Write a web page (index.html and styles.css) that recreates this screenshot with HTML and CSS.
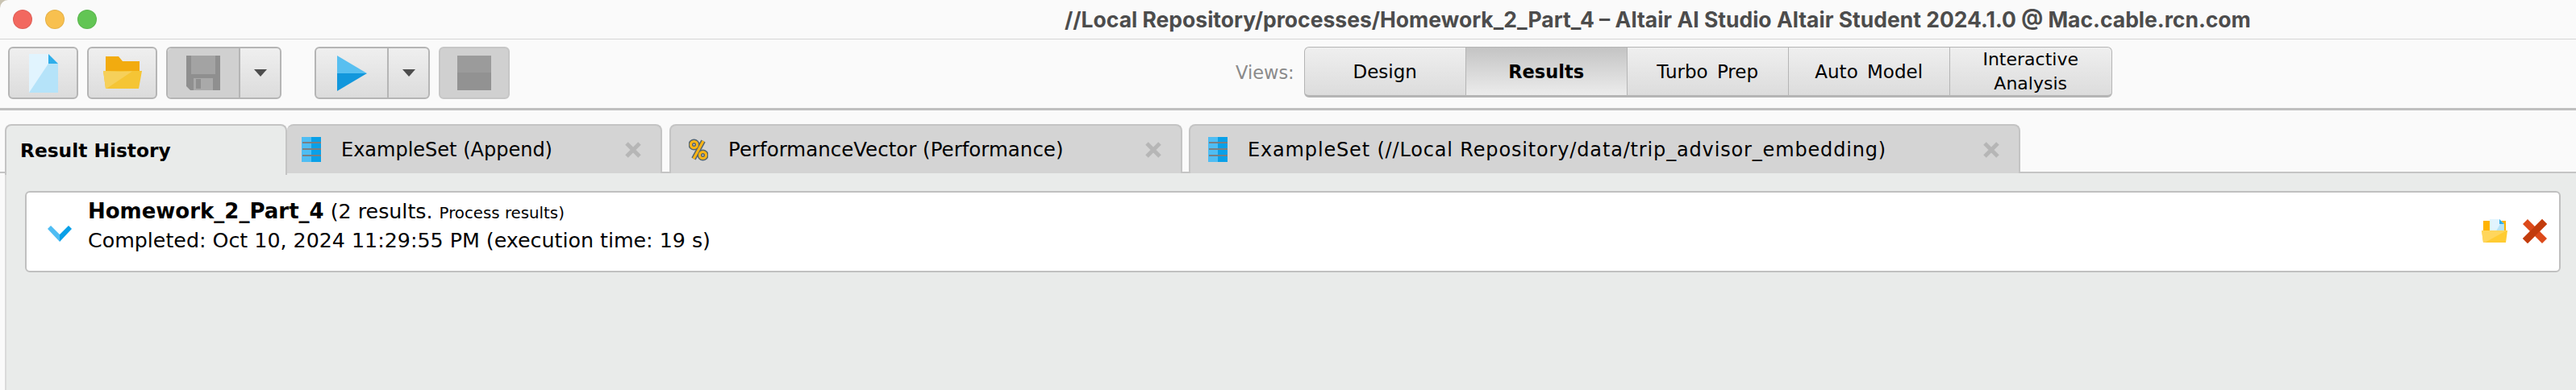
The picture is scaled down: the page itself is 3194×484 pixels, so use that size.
FILE: index.html
```html
<!DOCTYPE html>
<html lang="en">
<head>
    <meta charset="UTF-8">
    <meta name="viewport" content="width=device-width, initial-scale=1.0">
    <title>Altair AI Studio</title>
    <link rel="stylesheet" href="styles.css">
</head>
<body>
    <!-- window title -->
    <div class="titlebar">
        <div class="lights">
            <span class="light red"></span>
            <span class="light yellow"></span>
            <span class="light green"></span>
        </div>
        <div class="window-title">//Local Repository/processes/Homework_2_Part_4 – Altair AI Studio Altair Student 2024.1.0 @ Mac.cable.rcn.com</div>
    </div>

    <!-- toolbar -->
    <div class="toolbar">
        <div class="tool">
            <svg width="36" height="48" viewBox="0 0 36 48"><path d="M0 0H24L36 12V48H0Z" fill="#e1f4fe"/><path d="M0 48L24 12H36V48Z" fill="#b5e3f9"/><path d="M24 0L36 12H24Z" fill="#2faeea"/></svg>
        </div>
        <div class="tool tool-open">
            <svg width="48" height="40" viewBox="0 0 48 40"><path d="M3 0H19L24 6H45V24H3Z" fill="#f2ab0f"/><path d="M0 18H48L44 40H3Z" fill="#f5c535"/><path d="M0 18L21 19L36 18.500L4 40H3Z" fill="#f6d05a"/></svg>
        </div>
        <div class="split tool-save">
            <div class="split-main off">
                <svg width="42" height="43" viewBox="0 0 42 43"><path d="M0 0H42V43H5L0 38Z" fill="#8f8f8f"/><path d="M6 0H36V23H6Z" fill="#a3a3a3"/><path d="M9 28H33V43H9Z" fill="#a9a9a9"/><path d="M12 29H18V41H12Z" fill="#8f8f8f"/></svg>
            </div>
            <div class="split-arrow"><span class="caret"></span></div>
        </div>
        <div class="split tool-run">
            <div class="split-main">
                <svg width="37" height="44" viewBox="0 0 37 44"><path d="M0 0L37 22H0Z" fill="#58bff0"/><path d="M0 22H37L0 44Z" fill="#1297dc"/></svg>
            </div>
            <div class="split-arrow"><span class="caret"></span></div>
        </div>
        <div class="tool off">
            <svg width="42" height="43" viewBox="0 0 42 43"><rect width="42" height="22" fill="#9b9b9b"/><rect y="21" width="42" height="22" fill="#929292"/></svg>
        </div>

        <div class="views">
            <span class="views-label">Views:</span>
            <div class="seg-group">
                <div class="seg">Design</div>
                <div class="seg seg-on">Results</div>
                <div class="seg">Turbo Prep</div>
                <div class="seg">Auto Model</div>
                <div class="seg seg-small">Interactive<br>Analysis</div>
            </div>
        </div>
    </div>

    <!-- tabs -->
    <div class="tabs">
        <div class="tab tab-active">Result History</div>
        <div class="tab tab-append">
            <svg class="tab-icon" width="24" height="31" viewBox="0 0 24 31"><rect width="12" height="31" fill="#4fbdf3"/><rect x="12" width="12" height="31" fill="#09a0e8"/><path d="M1 7H24M1 15H24M1 23H24" stroke="#7a7f82" stroke-width="2"/></svg>
            <span>ExampleSet (Append)</span>
            <svg class="tab-close" width="20" height="20" viewBox="0 0 20 20"><path d="M2 2L18 18M18 2L2 18" stroke="#b6b6b6" stroke-width="5"/></svg>
        </div>
        <div class="tab tab-perf">
            <svg class="tab-icon" width="24" height="28" viewBox="0 0 24 28"><g fill="none" stroke="#54656f" stroke-width="6"><circle cx="6.500" cy="7.500" r="4"/><circle cx="17.500" cy="20.500" r="4"/><path d="M18 3L6 25"/></g><g fill="none" stroke="#fdb515" stroke-width="3"><circle cx="6.500" cy="7.500" r="4"/><circle cx="17.500" cy="20.500" r="4"/><path d="M18 3L6 25"/></g></svg>
            <span>PerformanceVector (Performance)</span>
            <svg class="tab-close" width="20" height="20" viewBox="0 0 20 20"><path d="M2 2L18 18M18 2L2 18" stroke="#b6b6b6" stroke-width="5"/></svg>
        </div>
        <div class="tab tab-embed">
            <svg class="tab-icon" width="24" height="31" viewBox="0 0 24 31"><rect width="12" height="31" fill="#4fbdf3"/><rect x="12" width="12" height="31" fill="#09a0e8"/><path d="M1 7H24M1 15H24M1 23H24" stroke="#7a7f82" stroke-width="2"/></svg>
            <span>ExampleSet (//Local Repository/data/trip_advisor_embedding)</span>
            <svg class="tab-close" width="20" height="20" viewBox="0 0 20 20"><path d="M2 2L18 18M18 2L2 18" stroke="#b6b6b6" stroke-width="5"/></svg>
        </div>
    </div>

    <!-- result list -->
    <div class="panel">
        <div class="card">
            <svg class="chevron" width="30" height="20" viewBox="0 0 30 20"><path d="M0 4L4 0L15 11V20Z" fill="#4fbdf3"/><path d="M30 4L26 0L15 11V20Z" fill="#09a0e8"/></svg>
            <div class="card-text">
                <div><b>Homework_2_Part_4</b> (2 results. <span class="note">Process results)</span></div>
                <div>Completed: Oct 10, 2024 11:29:55 PM (execution time: 19 s)</div>
            </div>
            <div class="card-actions">
                <svg width="32" height="29" viewBox="0 0 32 29"><path d="M2 2H30V16H2Z" fill="#ffb300"/><path d="M10 0H22L28 6V20H10Z" fill="#e1f4fe"/><path d="M15 20L23 6H28V20Z" fill="#b5e3f9"/><path d="M22 0L28 6H22Z" fill="#2faeea"/><path d="M1 14L10 15L32 14L30 29H2L0 14Z" fill="#ffcc33"/><path d="M0 14L31 14L4 29H2Z" fill="#ffd65c"/></svg>
                <svg width="30" height="30" viewBox="0 0 30 30"><path d="M0 6L6 0L15 9L24 0L30 6L21 15L30 24L24 30L15 21L6 30L0 24L9 15Z" fill="#dc4a1a"/><path d="M24 0L30 6L6 30L0 24Z" fill="#c23c0d"/></svg>
            </div>
        </div>
    </div>
</body>
</html>
```

FILE: styles.css
```css
html {
    background-color: #c9c3b2;
    margin: 0;
}
body {
    margin: 0;
    width: 3194px;
    height: 484px;
    overflow: hidden;
    background-color: #fafafa;
    border-top-left-radius: 10px;
    font-family: "DejaVu Sans", sans-serif;
    font-size: 24px;
    color: #000;
    display: flex;
    flex-direction: column;
}

/* title bar */
.titlebar {
    height: 48px;
    flex: none;
    display: flex;
    align-items: center;
    padding-left: 16px;
    border-bottom: 1px solid #d6d6d6;
}
.lights {
    display: flex;
    gap: 16px;
}
.light {
    width: 24px;
    height: 24px;
    border-radius: 50%;
    box-sizing: border-box;
    border: 1px solid rgba(0, 0, 0, 0.08);
}
.red { background-color: #f2685f; }
.yellow { background-color: #f8c04f; }
.green { background-color: #62c554; }
.window-title {
    margin-left: 1200px;
    font-family: Inter, sans-serif;
    font-weight: 700;
    font-size: 26.500px;
    color: #4c4c4c;
    white-space: nowrap;
}

/* toolbar */
.toolbar {
    height: 88px;
    flex: none;
    box-sizing: border-box;
    display: flex;
    align-items: flex-start;
    padding: 9px 0 0 10px;
    border-bottom: 3px solid #bfbfbf;
}
.tool, .split, .seg-group {
    box-sizing: border-box;
    height: 65px;
    border: 2px solid #b5b5b5;
    border-radius: 6px;
    background: linear-gradient(#efefef, #dcdcdc);
}
.tool {
    width: 87px;
    margin-right: 11px;
    display: flex;
    align-items: center;
    justify-content: center;
}
.tool-open svg { margin-top: -1px; }
.tool.off {
    background: #d0d0d0;
    border-color: #c6c6c6;
    width: 88px;
}
.split {
    display: flex;
    width: 143px;
}
.tool-save { margin-right: 41px; }
.tool-run { margin-right: 11px; }
.split-main {
    width: 88px;
    flex: none;
    display: flex;
    align-items: center;
    justify-content: center;
    border-right: 2px solid #b5b5b5;
}
.split-main.off {
    background: #d0d0d0;
    border-radius: 5px 0 0 5px;
}
.split-arrow {
    flex: 1;
    display: flex;
    align-items: center;
    justify-content: center;
}
.caret {
    width: 0;
    height: 0;
    border-left: 8px solid transparent;
    border-right: 8px solid transparent;
    border-top: 9px solid #4d4d4d;
}
.views {
    display: flex;
    align-items: center;
    margin-left: 889px;
    height: 63px;
}
.views-label {
    color: #8a8a8a;
    font-size: 22.500px;
    margin-right: 12px;
}
.seg-group {
    display: flex;
    height: 63px;
    border-width: 1px 1px 3px;
    overflow: hidden;
}
.seg {
    width: 200px;
    box-sizing: border-box;
    display: flex;
    align-items: center;
    justify-content: center;
    text-align: center;
    font-size: 23px;
    word-spacing: 4px;
    border-right: 1px solid #b5b5b5;
}
.seg:last-child { border-right: 0; }
.seg-on {
    font-weight: bold;
    font-size: 22.500px;
    background: linear-gradient(#c4c4c4, #ececec);
}
.seg-small {
    font-size: 22px;
    line-height: 30px;
}

/* tabs */
.tabs {
    display: flex;
    height: 61px;
    flex: none;
    margin-top: 17px;
    padding-left: 6px;
    box-sizing: border-box;
    border-bottom: 2px solid #c4c4c4;
}
.tab {
    box-sizing: border-box;
    height: 61px;
    display: flex;
    align-items: center;
    white-space: nowrap;
    background-color: #d4d4d4;
    border: 2px solid #c4c4c4;
    border-bottom: 0;
    border-radius: 8px 8px 0 0;
}
.tab-active {
    width: 350px;
    background-color: #e9ebea;
    font-weight: bold;
    font-size: 23.300px;
    padding-left: 17px;
    position: relative;
    height: 63px;
    z-index: 1;
}
.tab-append {
    width: 465px;
    padding-left: 18px;
    border-left: 0;
}
.tab-perf {
    width: 636px;
    margin-left: 9px;
    padding-left: 22px;
    font-size: 24.500px;
}
.tab-embed {
    width: 1031px;
    margin-left: 8px;
    padding-left: 22px;
    letter-spacing: 0.840px;
}
.tab-icon {
    margin-right: 25px;
    flex: none;
}
.tab-close {
    margin-left: auto;
    margin-right: 24px;
    flex: none;
}

/* result list */
.panel {
    flex: 1;
    margin-left: 6px;
    padding: 22px 19px 0 23px;
    background-color: #e9ebea;
    border-left: 2px solid #dadada;
}
.card {
    box-sizing: border-box;
    height: 101px;
    display: flex;
    align-items: center;
    background-color: #fff;
    border: 2px solid #c0c0c0;
    border-radius: 6px;
    padding-left: 26px;
}
.chevron { margin-right: 20px; margin-top: 4px; }
.card-text {
    font-size: 25.300px;
    line-height: 34px;
    margin-top: -15px;
}
.card-text b { font-size: 26px; }
.note { font-size: 19.800px; }
.card-actions {
    margin-left: auto;
    margin-right: 15px;
    margin-top: -2px;
    display: flex;
    gap: 19px;
    align-items: center;
}
```
